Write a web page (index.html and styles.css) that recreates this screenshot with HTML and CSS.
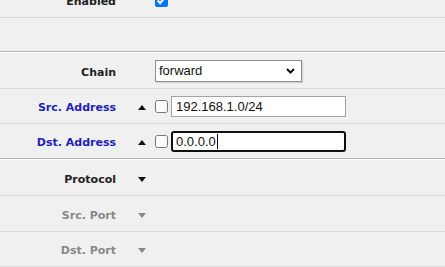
FILE: index.html
```html
<!DOCTYPE html>
<html lang="en">
<head>
  <meta charset="UTF-8" />
  <title>Firewall Rule</title>
  <link rel="stylesheet" href="styles.css">
</head>
<body>
  <div class="form">
    <div class="row">
      <label class="label">Enabled</label>
      <span class="toggle"></span>
      <div class="value">
        <input type="checkbox" class="check" checked>
      </div>
    </div>

    <div class="blank"></div>
    <div class="sep"></div>

    <div class="row tall">
      <label class="label">Chain</label>
      <span class="toggle"></span>
      <div class="value">
        <div class="select-wrap">
          <select class="select">
            <option>forward</option>
            <option>input</option>
            <option>output</option>
          </select>
          <svg class="chevron" width="9" height="6" viewBox="0 0 9 6">
            <path d="M1 1 L4.5 4.5 L8 1" fill="none" stroke="#111" stroke-width="2"/>
          </svg>
        </div>
      </div>
    </div>

    <div class="row">
      <label class="label blue">Src. Address</label>
      <span class="toggle"><i class="arrow up"></i></span>
      <div class="value">
        <input type="checkbox" class="check">
        <input type="text" class="field" value="192.168.1.0/24">
      </div>
    </div>

    <div class="row last">
      <label class="label blue">Dst. Address</label>
      <span class="toggle"><i class="arrow up"></i></span>
      <div class="value">
        <input type="checkbox" class="check">
        <div class="field focused"><span>0.0.0.0</span><i class="caret"></i></div>
      </div>
    </div>
    <div class="sep"></div>

    <div class="row tall">
      <label class="label">Protocol</label>
      <span class="toggle"><i class="arrow down"></i></span>
      <div class="value"></div>
    </div>

    <div class="row tall">
      <label class="label gray">Src. Port</label>
      <span class="toggle"><i class="arrow down gray"></i></span>
      <div class="value"></div>
    </div>

    <div class="row">
      <label class="label gray">Dst. Port</label>
      <span class="toggle"><i class="arrow down gray"></i></span>
      <div class="value"></div>
    </div>
  </div>
</body>
</html>
```

FILE: styles.css
```css
body {
  margin: 0;
  background: #f0f0f0;
  font-family: "DejaVu Sans", Verdana, sans-serif;
}

.form {
  margin-top: -17px;
}

.row {
  display: grid;
  grid-template-columns: 116px 39px 1fr;
  align-items: center;
  height: 34px;
  border-bottom: 1px solid #d9d9d9;
}

.row.tall {
  height: 35px;
}

.row.last {
  border-bottom: none;
}

.blank {
  height: 33px;
}

.sep {
  border-top: 1px solid #b4b4b4;
  border-bottom: 1px solid #fff;
}

.label {
  padding-top: 3px;
  text-align: right;
  font-size: 11px;
  font-weight: bold;
  color: #222;
}

.label.blue {
  color: #1f1fbb;
}

.label.gray {
  color: #888;
}

.toggle {
  display: flex;
  justify-content: flex-end;
  padding-top: 3px;
  padding-right: 9px;
}

.arrow {
  width: 0;
  height: 0;
  border-left: 4px solid transparent;
  border-right: 4px solid transparent;
}

.arrow.up {
  border-bottom: 5px solid #111;
}

.arrow.down {
  border-top: 5px solid #111;
}

.arrow.down.gray {
  border-top-color: #888;
}

.value {
  display: flex;
  align-items: center;
  gap: 3px;
}

.check {
  margin: 0;
  width: 13px;
  height: 13px;
}

.select-wrap {
  position: relative;
  width: 147px;
  height: 22px;
}

.select {
  appearance: none;
  width: 100%;
  height: 100%;
  margin: 0;
  padding: 0 0 0 3px;
  border: 1px solid #8f8f8f;
  border-radius: 0;
  background: #fff;
  font-family: "Liberation Sans", Arial, sans-serif;
  font-size: 13px;
  color: #111;
  box-shadow: 1px 1px 1px rgba(0, 0, 0, 0.12);
}

.chevron {
  position: absolute;
  right: 7px;
  top: 8px;
  pointer-events: none;
}

.field {
  box-sizing: border-box;
  width: 175px;
  height: 21px;
  margin: 0;
  padding: 0 4px;
  border: 1px solid #a3a3a3;
  border-radius: 0;
  background: #fff;
  font-family: "Liberation Sans", Arial, sans-serif;
  font-size: 13px;
  color: #111;
}

.field.focused {
  display: flex;
  align-items: center;
  padding: 0 3px;
  border: 2px solid #101010;
  border-radius: 3px;
}

.caret {
  width: 1px;
  height: 15px;
  margin-left: 1px;
  background: #000;
}
```
